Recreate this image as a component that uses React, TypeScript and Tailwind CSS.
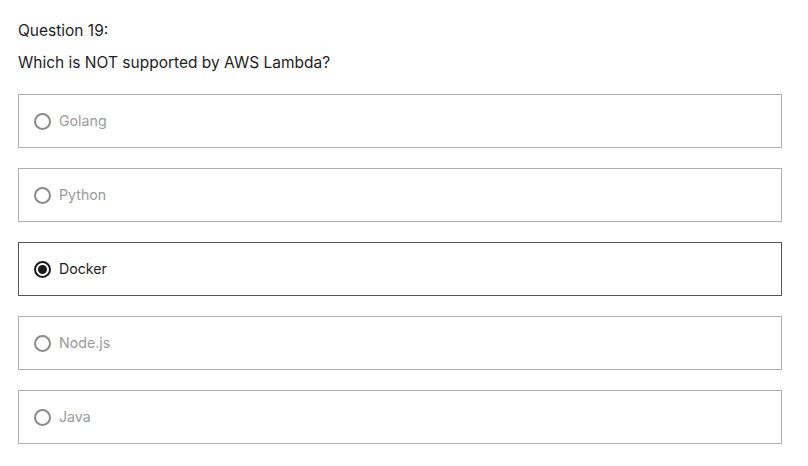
import { useState } from "react"

const options = ["Golang", "Python", "Docker", "Node.js", "Java"]

export default function App() {
  const [selected, setSelected] = useState("Docker")

  return (
    <div className="min-h-[466px] bg-white px-[18px] pt-[19px] font-['Inter',sans-serif] text-[#1d1d1f]">
      <p className="text-[15.5px] leading-6">Question 19:</p>
      <p className="mt-2 text-[15.5px] leading-6">Which is NOT supported by AWS Lambda?</p>

      <div className="mt-[19px] flex w-[764px] flex-col gap-5">
        {options.map((opt) => {
          const active = opt === selected
          return (
            <label
              key={opt}
              onClick={() => setSelected(opt)}
              className={`flex h-[54px] cursor-pointer items-center gap-2 border px-[15px] ${
                active ? "border-[#555555]" : "border-[#b0b0b0]"
              }`}
            >
              {/* radio */}
              <span
                className={`flex h-[17px] w-[17px] items-center justify-center rounded-full border-2 ${
                  active ? "border-[#1a1a1a]" : "border-[#8a8a8a]"
                }`}
              >
                {active && <span className="h-[9px] w-[9px] rounded-full bg-[#1a1a1a]" />}
              </span>
              <span className={`text-[14.2px] ${active ? "text-[#1d1d1f]" : "text-[#9a9a9a]"}`}>{opt}</span>
            </label>
          )
        })}
      </div>
    </div>
  )
}
